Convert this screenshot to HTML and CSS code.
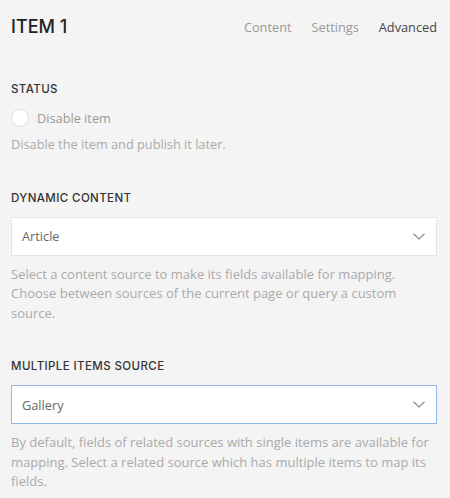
FILE: index.html
```html
<!DOCTYPE html>
<html lang="en">
<head>
    <meta charset="UTF-8">
    <meta name="viewport" content="width=device-width, initial-scale=1.0">
    <title>Item 1</title>
    <link rel="stylesheet" href="styles.css">
</head>
<body>
    <div class="header">
        <h1 class="title">ITEM 1</h1>
        <nav class="tabs">
            <a class="tab">Content</a>
            <a class="tab">Settings</a>
            <a class="tab active">Advanced</a>
        </nav>
    </div>

    <div class="field">
        <h3 class="label">Status</h3>
        <label class="radio-row">
            <span class="radio"></span>
            <span>Disable item</span>
        </label>
        <p class="help help-radio">Disable the item and publish it later.</p>
    </div>

    <div class="field">
        <h3 class="label">Dynamic Content</h3>
        <div class="select">
            <span>Article</span>
            <svg class="chevron" width="12" height="7" viewBox="0 0 12 7"><polyline points="0.5,0.8 6,6 11.5,0.8" fill="none" stroke="#8a8a8a" stroke-width="1.2"/></svg>
        </div>
        <p class="help">Select a content source to make its fields available for mapping. Choose between sources of the current page or query a custom source.</p>
    </div>

    <div class="field">
        <h3 class="label">Multiple Items Source</h3>
        <div class="select focus">
            <span>Gallery</span>
            <svg class="chevron" width="12" height="7" viewBox="0 0 12 7"><polyline points="0.5,0.8 6,6 11.5,0.8" fill="none" stroke="#8a8a8a" stroke-width="1.2"/></svg>
        </div>
        <p class="help">By default, fields of related sources with single items are available for mapping. Select a related source which has multiple items to map its fields.</p>
    </div>
</body>
</html>
```

FILE: styles.css
```css
body {
    margin: 0;
    padding: 0 13px 0 11px;
    background-color: #f4f4f4;
    font-family: "Open Sans", sans-serif;
    font-size: 13px;
    color: #666;
}
.header {
    display: flex;
    justify-content: space-between;
    align-items: center;
    height: 39px;
    padding-top: 7px;
}
.title {
    margin: 0;
    font-family: Inter, sans-serif;
    font-size: 18px;
    font-weight: 500;
    color: #222;
}
.tabs {
    display: flex;
    gap: 20px;
    font-size: 12.75px;
}
.tab {
    color: #999;
    cursor: pointer;
}
.tab.active {
    color: #444;
}
.field {
    margin-top: 35px;
}
.label {
    margin: 0 0 11px;
    font-family: Inter, sans-serif;
    font-size: 11.5px;
    font-weight: 500;
    letter-spacing: 0.4px;
    line-height: 16px;
    text-transform: uppercase;
    color: #333;
}
.radio-row {
    display: flex;
    align-items: center;
    gap: 8px;
    height: 20px;
    margin-top: 10px;
    font-size: 12.75px;
    color: #999;
}
.radio {
    width: 16px;
    height: 16px;
    border: 1px solid #ddd;
    border-radius: 50%;
    background: white;
}
.help {
    margin: 9px 0 0;
    line-height: 19.5px;
    color: #aaa;
}
.help-radio {
    margin-top: 7px;
    font-size: 12.75px;
}
.select {
    display: flex;
    align-items: center;
    justify-content: space-between;
    height: 37px;
    padding: 0 11px 0 10px;
    background: white;
    border: 1px solid #e5e5e5;
    font-size: 12.75px;
    color: #666;
}
.select.focus {
    border-color: #8fb7e6;
}
```
